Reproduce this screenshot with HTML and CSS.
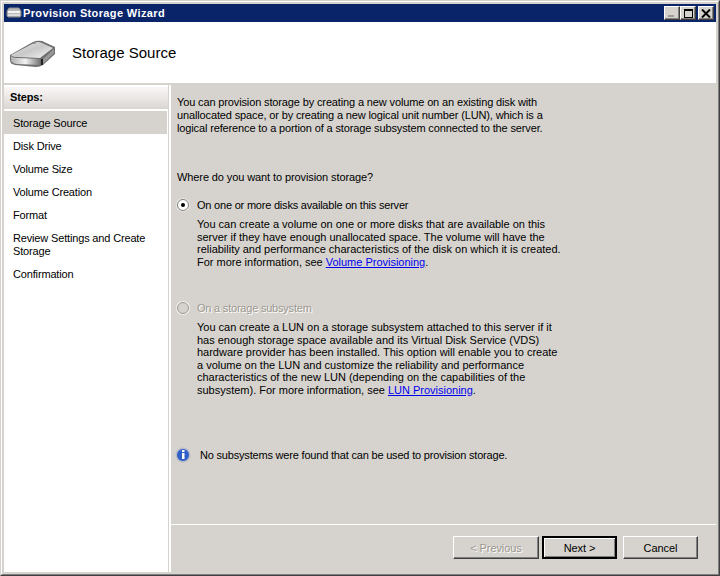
FILE: index.html
```html
<!DOCTYPE html>
<html lang="en">
<head>
<meta charset="utf-8">
<title>Provision Storage Wizard</title>
<link rel="stylesheet" href="styles.css">
</head>
<body>
<div class="window">
  <div class="window-inner">
    <div class="titlebar">
      <svg class="title-icon" width="16" height="16" viewBox="0 0 16 16">
        <path d="M1 6 L3 3 H13 L15 6 V11 L14 12 H2 L1 11 Z" fill="#b8b8b8" stroke="#8a8a8a"/>
        <path d="M2 6 H14 V8 H2 Z" fill="#f4f4f4"/>
        <path d="M2 9 H14 V11 H2 Z" fill="#dcdcdc"/>
      </svg>
      <span class="title-text">Provision Storage Wizard</span>
      <div class="caption-buttons">
        <span class="cap-btn"><i class="min-glyph"></i></span>
        <span class="cap-btn"><i class="max-glyph"></i></span>
        <span class="cap-btn close-btn">
          <svg width="10" height="9" viewBox="0 0 10 9"><path d="M1 0.5 L9 8.5 M9 0.5 L1 8.5" stroke="#000" stroke-width="2" fill="none"/></svg>
        </span>
      </div>
    </div>
    <div class="header">
      <svg class="disk-icon" width="48" height="32" viewBox="0 0 48 32">
        <defs>
          <linearGradient id="top" x1="0" y1="0" x2="1" y2="1">
            <stop offset="0" stop-color="#e8e8e8"/>
            <stop offset="0.5" stop-color="#c8c8c8"/>
            <stop offset="1" stop-color="#f4f4f4"/>
          </linearGradient>
          <linearGradient id="front" x1="0" y1="0" x2="1" y2="0">
            <stop offset="0" stop-color="#b0b0b0"/>
            <stop offset="0.5" stop-color="#f2f2f2"/>
            <stop offset="1" stop-color="#777"/>
          </linearGradient>
        </defs>
        <path d="M1 18 L24 5 Q28 3 33 4 L46 10 V17 L34 28 Q31 30 27 30 L6 28 Q1 27 1 23 Z" fill="#6e6e6e"/>
        <path d="M2 18 L25 6 Q29 4 33 6 L44 11 L31 21 L9 20 Q3 20 2 18 Z" fill="url(#top)"/>
        <path d="M2 19 Q4 21 9 21 L31 22 V28 L8 27 Q2 26 2 23 Z" fill="url(#front)"/>
        <path d="M34 22 L45 12 V16 L34 27 Z" fill="#989898"/>
        <rect x="32" y="22" width="2" height="6" fill="#222"/>
        <ellipse cx="25" cy="6" rx="2" ry="1" fill="#888"/>
      </svg>
      <h1 class="header-title">Storage Source</h1>
    </div>
    <div class="rule"></div>
    <div class="body">
      <nav class="steps">
        <div class="steps-head">Steps:</div>
        <div class="step current">Storage Source</div>
        <div class="step">Disk Drive</div>
        <div class="step">Volume Size</div>
        <div class="step">Volume Creation</div>
        <div class="step">Format</div>
        <div class="step">Review Settings and Create<br>Storage</div>
        <div class="step">Confirmation</div>
      </nav>
      <main class="panel">
        <div class="content">
          <p class="intro">You can provision storage by creating a new volume on an existing disk with<br>unallocated space, or by creating a new logical unit number (LUN), which is a<br>logical reference to a portion of a storage subsystem connected to the server.</p>
          <p class="question">Where do you want to provision storage?</p>
          <div class="option first">
            <span class="radio"><i class="dot"></i></span>
            <span class="option-label">On one or more disks available on this server</span>
          </div>
          <p class="desc">You can create a volume on one or more disks that are available on this<br>server if they have enough unallocated space. The volume will have the<br>reliability and performance characteristics of the disk on which it is created.<br>For more information, see <a href="#">Volume Provisioning</a>.</p>
          <div class="option second">
            <span class="radio disabled"></span>
            <span class="option-label muted">On a storage subsystem</span>
          </div>
          <p class="desc">You can create a LUN on a storage subsystem attached to this server if it<br>has enough storage space available and its Virtual Disk Service (VDS)<br>hardware provider has been installed.  This option will enable you to create<br>a volume on the LUN and customize the reliability and performance<br>characteristics of the new LUN (depending on the capabilities of the<br>subsystem).  For more information, see <a href="#">LUN  Provisioning</a>.</p>
          <div class="notice">
            <svg class="info-icon" width="16" height="16" viewBox="0 0 16 16">
              <circle cx="8" cy="8" r="7.500" fill="#b8bcc8"/>
              <circle cx="8" cy="8" r="6" fill="#2f5fc8"/>
              <rect x="7" y="3" width="2.500" height="2" fill="#fff"/>
              <rect x="7" y="6" width="2.500" height="6" fill="#fff"/>
            </svg>
            <span>No subsystems were found that can be used to provision storage.</span>
          </div>
        </div>
        <div class="actions">
          <button class="btn prev" type="button" disabled>&lt; Previous</button>
          <button class="btn next" type="button">Next &gt;</button>
          <button class="btn cancel" type="button">Cancel</button>
        </div>
      </main>
    </div>
  </div>
</div>
</body>
</html>
```

FILE: styles.css
```css
* { box-sizing: border-box; }
html, body { margin: 0; padding: 0; }
body {
  width: 720px;
  height: 576px;
  overflow: hidden;
  font-family: "Liberation Sans", Arial, sans-serif;
  font-size: 11px;
  letter-spacing: -0.08px;
  color: #000;
  background: #d6d3ce;
}
.window {
  width: 720px;
  height: 576px;
  border: 1px solid;
  border-color: #d6d3ce #404040 #404040 #d6d3ce;
}
.window-inner {
  height: 100%;
  border: 1px solid;
  border-color: #fff #808080 #808080 #fff;
  padding: 2px;
  background: #d6d3ce;
  display: flex;
  flex-direction: column;
}
.titlebar {
  height: 18px;
  flex: none;
  background: #0a246a;
  color: #fff;
  display: flex;
  align-items: center;
  padding: 0 2px;
}
.title-icon { flex: none; margin-right: 1px; }
.title-text { font-weight: 700; font-size: 11px; letter-spacing: 0.37px; }
.caption-buttons { margin-left: auto; display: flex; }
.cap-btn {
  width: 16px;
  height: 14px;
  background: #d6d3ce;
  border: 1px solid;
  border-color: #fff #404040 #404040 #fff;
  box-shadow: inset -1px -1px 0 #808080;
  display: flex;
  align-items: center;
  justify-content: center;
}
.close-btn { margin-left: 2px; }
.min-glyph { width: 6px; height: 2px; background: #a09c94; align-self: flex-end; margin: 0 3px 2px 0; }
.max-glyph { width: 9px; height: 9px; border: 1px solid #000; border-top-width: 2px; }
.header {
  height: 61px;
  flex: none;
  background: #fff;
  display: flex;
  align-items: center;
  padding-left: 5px;
}
.disk-icon { flex: none; margin-right: 15px; }
.header-title {
  margin: 0;
  font-size: 15px;
  font-weight: 400;
  letter-spacing: 0;
}
.rule { height: 2px; flex: none; background: #d6d3ce; }
.body { flex: 1; min-height: 0; display: flex; background: #fff; }
.steps {
  width: 165px;
  flex: none;
  margin-right: 1px;
  padding-top: 2px;
  background: #fff;
  border-right: 1px solid #d6d3ce;
  letter-spacing: -0.16px;
}
.steps-head {
  height: 22px;
  margin-bottom: 2px;
  padding-left: 6px;
  line-height: 21px;
  font-weight: 700;
  background: linear-gradient(#fbf7f7, #d9d6d2);
}
.step {
  margin-right: 1px;
  padding: 6px 0 4px 9px;
  line-height: 13px;
}
.current { background: #d6d3ce; }
.panel {
  flex: 1;
  min-width: 0;
  background: #d6d3ce;
  display: flex;
  flex-direction: column;
  margin-left: 1px;
}
.content { flex: 1; min-height: 0; padding: 11px 0 0 6px; }
p { margin: 0; }
.intro { line-height: 13px; letter-spacing: -0.135px; }
.question { margin-top: 36px; line-height: 13px; letter-spacing: -0.1px; }
.option { display: flex; align-items: center; height: 13px; letter-spacing: -0.21px; }
.option.first { margin-top: 14px; }
.option.second { margin-top: 33px; }
.radio {
  width: 12px;
  height: 12px;
  flex: none;
  margin-right: 8px;
  border-radius: 50%;
  background: #fff;
  border: 1px solid #808080;
  box-shadow: 0 0 0 1px #e8e6e1;
  display: flex;
  align-items: center;
  justify-content: center;
}
.radio.disabled { background: #d6d3ce; border-color: #9c9890; box-shadow: 0 0 0 1px #f2f1ee; }
.dot { width: 4px; height: 4px; border-radius: 50%; background: #000; }
.muted { color: #9c9890; text-shadow: 1px 1px 0 #fff; }
.desc { margin: 7px 0 0 20px; line-height: 12.500px; letter-spacing: -0.01px; }
a { color: #0000ee; }
.notice { display: flex; align-items: center; margin: 51px 0 0 -2px; letter-spacing: -0.19px; }
.info-icon { flex: none; margin-right: 9px; }
.actions {
  height: 48px;
  flex: none;
  border-top: 1px solid #fff;
  display: flex;
  align-items: flex-start;
  padding: 11px 0 0 282px;
}
.btn {
  height: 23px;
  padding: 0;
  font: inherit;
  letter-spacing: inherit;
  color: #000;
  background: #d6d3ce;
  border: 1px solid;
  border-color: #fff #404040 #404040 #fff;
  box-shadow: inset -1px -1px 0 #808080;
}
.prev { width: 86px; color: #9c9890; text-shadow: 1px 1px 0 #fff; }
.next {
  width: 75px;
  margin-left: 3px;
  border: 2px solid #000;
  box-shadow: inset 1px 1px 0 #fff, inset -1px -1px 0 #808080;
}
.cancel { width: 75px; margin-left: 6px; }
```
